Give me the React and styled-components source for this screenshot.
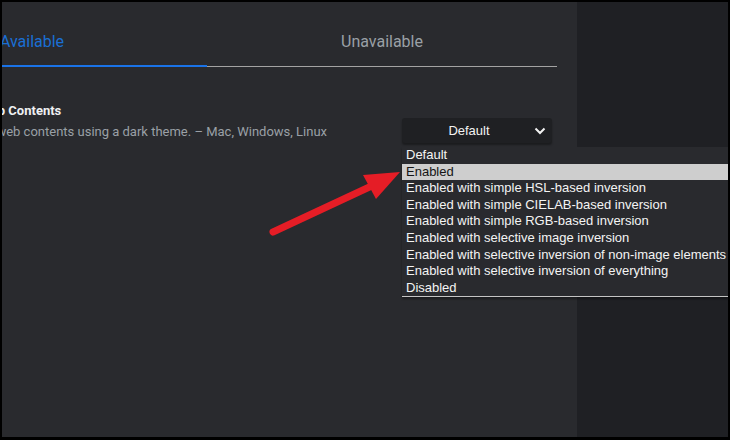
import React from 'react'
import styled, { createGlobalStyle } from 'styled-components'

const Global = createGlobalStyle`
  html, body { margin: 0; padding: 0; background: #000; }
  body { font-family: Roboto, "Noto Sans", sans-serif; }
`

const Frame = styled.div`
  position: relative;
  box-sizing: border-box;
  width: 730px;
  height: 440px;
  border: 2px solid #000;
  border-bottom-width: 3px;
  overflow: hidden;
  display: flex;
`

const Main = styled.div`
  width: 575px;
  flex: none;
  background: #292a2e;
`

const Side = styled.div`
  flex: 1;
  background: #1f2024;
`

const Column = styled.div`
  width: 700px;
  margin-left: -145px;
`

const Tabs = styled.div`
  display: flex;
  align-items: flex-start;
`

const Tab = styled.div`
  width: 350px;
  box-sizing: border-box;
  text-align: center;
  font-size: 16px;
  line-height: 20px;
  padding-top: 30px;
  padding-bottom: ${p => (p.$active ? '13px' : '14px')};
  color: ${p => (p.$active ? '#1a6fd4' : '#9aa0a6')};
  border-bottom: ${p => (p.$active ? '2px solid #1a73e8' : '1px solid #a3a3a3')};
`

const Experiment = styled.div`
  display: flex;
  align-items: flex-end;
  margin-top: 34px;
`

const Text = styled.div`
  flex: 1;
`

const Title = styled.div`
  font-size: 13px;
  font-weight: 700;
  line-height: 20px;
  color: #eef0f2;
`

const Desc = styled.div`
  font-size: 13px;
  line-height: 22px;
  color: #9aa0a6;
`

const SelectWrap = styled.div`
  position: relative;
  margin-right: 5px;
`

const Select = styled.div`
  box-sizing: border-box;
  width: 150px;
  height: 25px;
  padding-right: 16px;
  border-radius: 3px;
  background: #1f2023;
  display: flex;
  align-items: center;
  justify-content: center;
  font-family: "Liberation Sans", Arial, sans-serif;
  font-size: 13px;
  color: #f2f2f2;
  position: relative;
  box-shadow: 0 2px 2px rgba(0, 0, 0, 0.35);
`

const Chevron = styled.svg`
  position: absolute;
  right: 6px;
  top: 9px;
`

const Popup = styled.div`
  position: absolute;
  left: 0;
  top: 29px;
  width: 340px;
  background: #292a2e;
  border-bottom: 1px solid #c4c4c4;
  box-shadow: 0 2px 2px rgba(0, 0, 0, 0.35);
  font-family: "Liberation Sans", Arial, sans-serif;
  font-size: 13px;
  z-index: 2;
`

const Option = styled.div`
  height: 16.6px;
  line-height: 16.6px;
  padding-left: 4px;
  white-space: nowrap;
  color: ${p => (p.$hl ? '#151515' : '#f4f4f4')};
  background: ${p => (p.$hl ? '#cecece' : 'transparent')};
`

const Arrow = styled.svg`
  position: absolute;
  left: -2px;
  top: -2px;
  z-index: 3;
  pointer-events: none;
`

const options = [
  'Default',
  'Enabled',
  'Enabled with simple HSL-based inversion',
  'Enabled with simple CIELAB-based inversion',
  'Enabled with simple RGB-based inversion',
  'Enabled with selective image inversion',
  'Enabled with selective inversion of non-image elements',
  'Enabled with selective inversion of everything',
  'Disabled',
]

export default function App() {
  return (
    <>
      <Global />
      <Frame>
        <Main>
          <Column>
            <Tabs>
              <Tab $active>Available</Tab>
              <Tab>Unavailable</Tab>
            </Tabs>
            <Experiment>
              <Text>
                <Title>Force Dark Mode for Web Contents</Title>
                <Desc>Automatically render all web contents using a dark theme. – Mac, Windows, Linux</Desc>
              </Text>
              <SelectWrap>
                <Select>
                  Default
                  <Chevron width="12" height="8" viewBox="0 0 12 8">
                    <polyline points="1.5,1.5 6,6 10.5,1.5" fill="none" stroke="#f2f2f2" strokeWidth="2" />
                  </Chevron>
                </Select>
                <Popup>
                  {options.map((o, i) => (
                    <Option key={o} $hl={i === 1}>{o}</Option>
                  ))}
                </Popup>
              </SelectWrap>
            </Experiment>
          </Column>
        </Main>
        <Side />
        <Arrow width="730" height="440" viewBox="0 0 730 440">
          <line x1="273" y1="232" x2="378" y2="183" stroke="#e51d26" strokeWidth="7" strokeLinecap="round" />
          <polygon points="400,172 363,175 376,199" fill="#e51d26" />
        </Arrow>
      </Frame>
    </>
  )
}
